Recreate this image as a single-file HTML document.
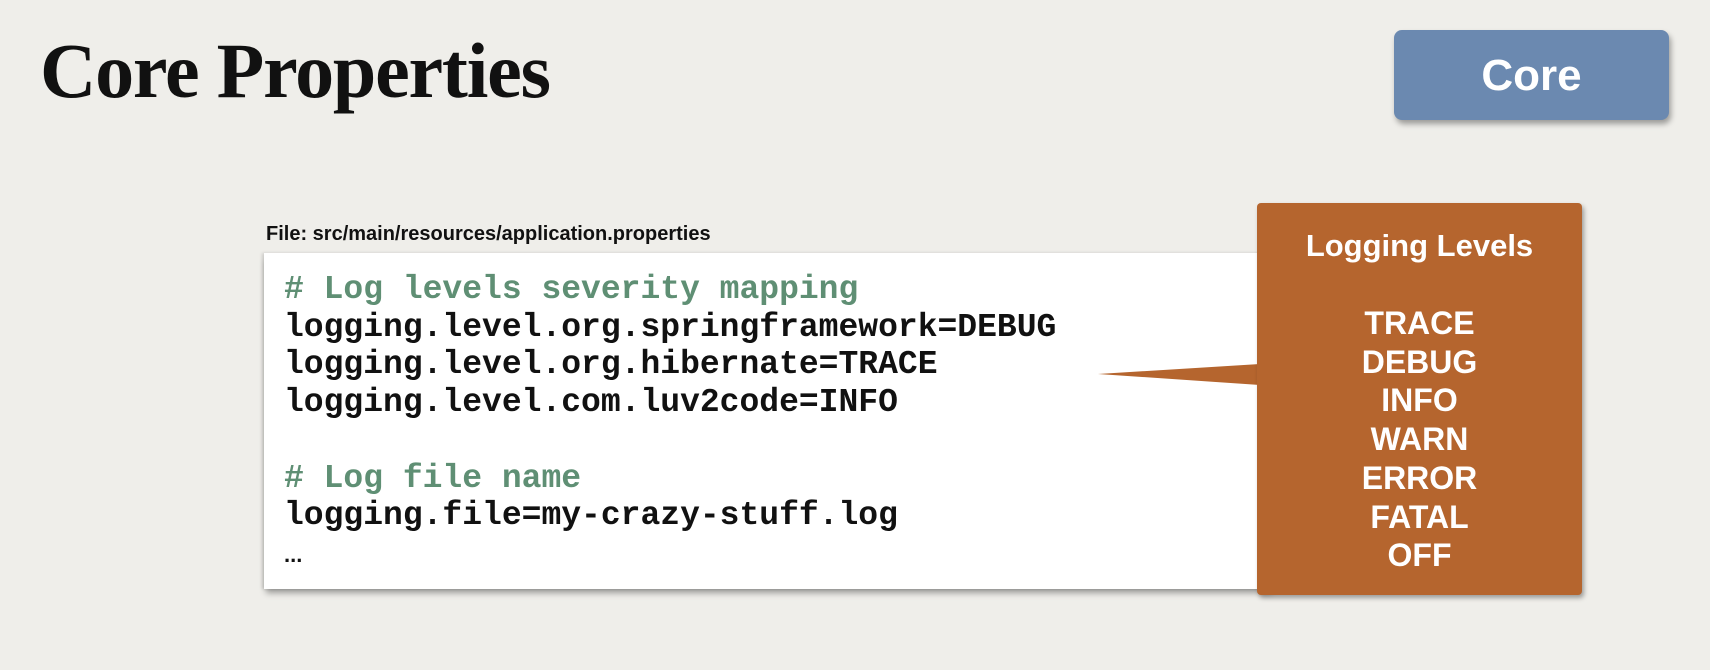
<!DOCTYPE html>
<html><head><meta charset="utf-8"><style>
html,body{margin:0;padding:0}
body{width:1710px;height:670px;background:#efeeea;position:relative;overflow:hidden;font-family:"Liberation Sans",sans-serif}
.title{position:absolute;left:40px;top:26px;font-family:"Liberation Serif",serif;font-weight:bold;font-size:78px;line-height:90px;color:#111;letter-spacing:-1.2px}
.core{position:absolute;left:1394px;top:30px;width:275px;height:90px;background:#6b89b0;border-radius:8px;box-shadow:2px 4px 6px rgba(0,0,0,.35);color:#fff;font-weight:bold;font-size:44px;text-align:center;line-height:92px}
.file{position:absolute;left:266px;top:223px;font-weight:bold;font-size:20px;color:#111}
.code{position:absolute;left:264px;top:253px;width:1010px;height:336px;background:#fff;box-shadow:0 6px 6px -2px rgba(0,0,0,.35),-2px 0 3px rgba(0,0,0,.15)}
.lines{position:absolute;left:284px;top:271px;font-family:"Liberation Mono",monospace;font-weight:bold;font-size:33px;line-height:37.7px;color:#111;white-space:pre}
.c{color:#5f8f74}
.orange{position:absolute;left:1257px;top:203px;width:325px;height:392px;background:#b5652e;border-radius:4px;box-shadow:2px 3px 5px rgba(0,0,0,.35);color:#fff;font-weight:bold;text-align:center}
.ll{font-size:31px;margin-top:25px;line-height:36px}
.lv{font-size:32px;line-height:38.7px;margin-top:40px}
</style></head><body>
<div class="title">Core Properties</div>
<div class="core">Core</div>
<div class="file">File: src/main/resources/application.properties</div>
<div class="code"></div>
<div class="lines"><span class="c"># Log levels severity mapping</span>
logging.level.org.springframework=DEBUG
logging.level.org.hibernate=TRACE
logging.level.com.luv2code=INFO

<span class="c"># Log file name</span>
logging.file=my-crazy-stuff.log
<span style="font-size:22px;font-family:'Liberation Sans',sans-serif">...</span></div>
<svg style="position:absolute;left:0;top:0" width="1710" height="670"><polygon points="1098,374 1260,364 1260,385" fill="#b5652e"/></svg>
<div class="orange">
<div class="ll">Logging Levels</div>
<div class="lv">TRACE<br>DEBUG<br>INFO<br>WARN<br>ERROR<br>FATAL<br>OFF</div>
</div>
</body></html>
